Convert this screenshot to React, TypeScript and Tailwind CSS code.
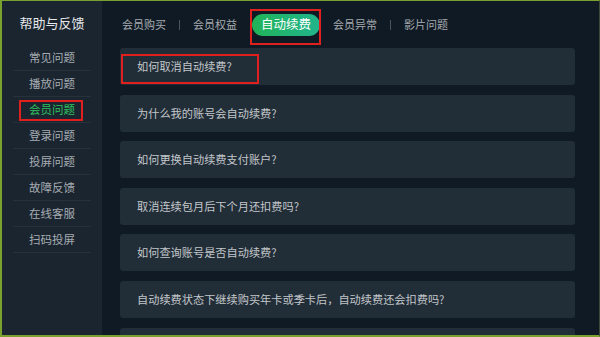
import React from 'react';

const menu = ['常见问题', '播放问题', '会员问题', '登录问题', '投屏问题', '故障反馈', '在线客服', '扫码投屏'];
const tabs = ['会员购买', '会员权益', '自动续费', '会员异常', '影片问题'];
const questions = [
    '如何取消自动续费?',
    '为什么我的账号会自动续费?',
    '如何更换自动续费支付账户?',
    '取消连续包月后下个月还扣费吗?',
    '如何查询账号是否自动续费?',
    '自动续费状态下继续购买年卡或季卡后，自动续费还会扣费吗?',
];

const activeMenu = 2;
const activeTab = 2;

export default function App() {
    return (
        <div
            className="w-[600px] h-[337px] overflow-hidden flex bg-[#0f1a24] border-l-2 border-t border-b-2 border-r border-l-[#7aa02e] border-t-[#7aa02e] border-b-[#7aa02e] border-r-[#3c4a36]"
            style={{ fontFamily: '"Noto Sans CJK SC", "Noto Sans", sans-serif' }}
        >
            {/* left menu */}
            <div className="w-[100px] shrink-0 bg-[#1a2530] flex flex-col items-center">
                <div className="h-[44px] flex items-center text-[13px] text-[#e6e8ea]">帮助与反馈</div>
                <ul className="w-[78px] flex flex-col">
                    {menu.map((m, i) => (
                        <li
                            key={m}
                            className="relative h-[26px] flex items-center justify-center border-b border-[#26313b] text-[11.5px]"
                        >
                            <span className={i === activeMenu ? 'text-[#2ec15c]' : 'text-[#a6abb0]'}>{m}</span>
                            {i === activeMenu && (
                                <span className="absolute left-[6px] top-[3px] w-[64px] h-[21px] border-2 border-[#e0201c]" />
                            )}
                        </li>
                    ))}
                </ul>
            </div>

            {/* content */}
            <div className="flex-1 flex flex-col pl-[18px] pr-[24px]">
                <div className="h-[47px] shrink-0 flex items-center gap-[13px] pl-[2px] text-[11px] text-[#a6abb0]">
                    {tabs.map((t, i) => {
                        const showSep = i > 0 && i !== activeTab && i - 1 !== activeTab;
                        return (
                            <React.Fragment key={t}>
                                {showSep && <span className="w-px h-[10px] bg-[#4a545d]" />}
                                {i === activeTab ? (
                                    <span className="relative ml-[2px] h-[22px] w-[68px] rounded-full bg-gradient-to-r from-[#22b357] to-[#22b48c] text-white text-[12.5px] flex items-center justify-center">
                                        {t}
                                        <span className="absolute -left-[2px] -top-[5px] w-[71px] h-[36px] border-2 border-[#e0201c]" />
                                    </span>
                                ) : (
                                    <span>{t}</span>
                                )}
                            </React.Fragment>
                        );
                    })}
                </div>

                <div className="flex flex-col gap-[9.6px]">
                    {questions.map((q, i) => (
                        <div
                            key={q}
                            className="relative h-[37px] shrink-0 rounded-[3px] bg-[#212d37] flex items-center pl-[17px] text-[11.2px] text-[#c3c7cb]"
                        >
                            {q}
                            {i === 0 && (
                                <span className="absolute left-[1px] top-[6px] w-[138px] h-[30px] border-2 border-[#e0201c]" />
                            )}
                        </div>
                    ))}
                    {/* next card, cut off by the screen edge */}
                    <div className="h-[37px] shrink-0 rounded-[3px] bg-[#212d37]" />
                </div>
            </div>
        </div>
    );
}
